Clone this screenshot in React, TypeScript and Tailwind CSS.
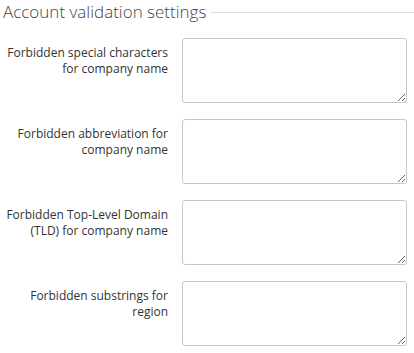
import React from 'react';

const fields = [
  'Forbidden special characters for company name',
  'Forbidden abbreviation for company name',
  'Forbidden Top-Level Domain (TLD) for company name',
  'Forbidden substrings for region',
];

export default function App() {
  return (
    <div className="w-[414px] h-[353px] bg-white font-['Open_Sans',sans-serif] overflow-hidden">
      {/* Section header */}
      <div className="flex items-center h-[24px] pl-[3px]">
        <span className="text-[17px] leading-[24px] font-light text-[#444] whitespace-nowrap">
          Account validation settings
        </span>
        <div className="flex-1 ml-[5px] mt-[1px] border-t border-[#ddd]" />
      </div>

      <div className="flex flex-col gap-[16px] mt-[14px] pr-[7px]">
        {fields.map((label) => (
          <div key={label} className="flex items-start">
            <label className="w-[168px] shrink-0 pt-[7px] text-right text-[12px] leading-[16px] text-[#333]">
              {label}
            </label>
            <textarea className="ml-[14px] w-[225px] h-[65px] border border-[#c4c8cc] rounded-[3px] bg-white resize-y outline-none" />
          </div>
        ))}
      </div>
    </div>
  );
}
